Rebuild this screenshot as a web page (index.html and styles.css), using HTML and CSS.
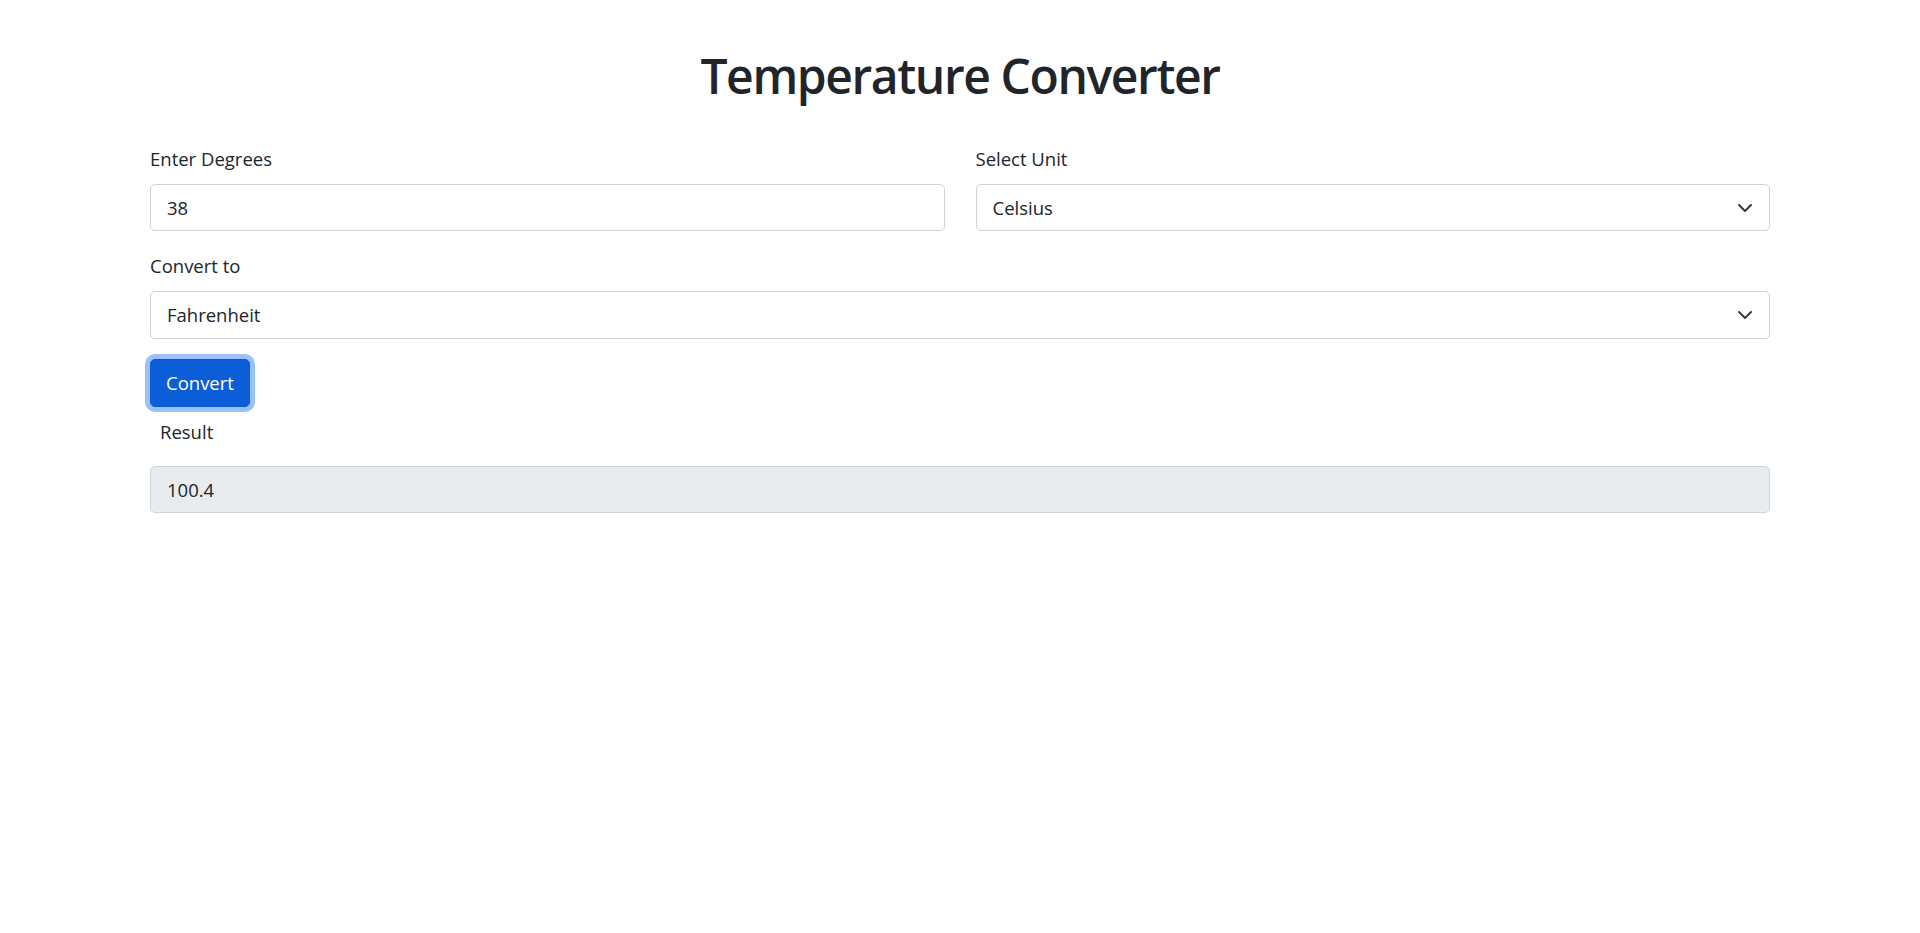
FILE: index.html
```html
<!DOCTYPE html>
<html lang="en">
<head>
<meta charset="utf-8">
<title>Temperature Converter</title>
<link rel="stylesheet" href="styles.css">
</head>
<body>
<div class="container">
  <h1 class="title">Temperature Converter</h1>
  <form class="converter">
    <div class="row">
      <div class="field">
        <label class="form-label" for="deg">Enter Degrees</label>
        <input class="form-control" id="deg" type="text" value="38">
      </div>
      <div class="field">
        <label class="form-label" for="unit">Select Unit</label>
        <div class="select-wrap">
          <select class="form-select" id="unit">
            <option>Celsius</option>
            <option>Fahrenheit</option>
            <option>Kelvin</option>
          </select>
          <svg class="chev" viewBox="0 0 16 16" width="16" height="16" aria-hidden="true"><path d="M2 5l6 6 6-6" fill="none" stroke="#343a40" stroke-width="2" stroke-linecap="round" stroke-linejoin="round"/></svg>
        </div>
      </div>
    </div>
    <div class="field full">
      <label class="form-label" for="to">Convert to</label>
      <div class="select-wrap">
        <select class="form-select" id="to">
          <option>Fahrenheit</option>
          <option>Celsius</option>
          <option>Kelvin</option>
        </select>
        <svg class="chev" viewBox="0 0 16 16" width="16" height="16" aria-hidden="true"><path d="M2 5l6 6 6-6" fill="none" stroke="#343a40" stroke-width="2" stroke-linecap="round" stroke-linejoin="round"/></svg>
      </div>
    </div>
    <button class="btn-primary" type="button">Convert</button>
    <label class="result-label" for="res">Result</label>
    <input class="form-control readonly" id="res" type="text" value="100.4" readonly>
  </form>
</div>
</body>
</html>
```
FILE: styles.css
```css
* { box-sizing: border-box; }
html, body { margin: 0; padding: 0; background: #fff; }
body {
  font-family: "Open Sans", "Noto Sans", "Liberation Sans", sans-serif;
  font-size: 20px;
  line-height: 1.5;
  color: #212529;
}
.container {
  max-width: 1650px;
  margin: 0 auto;
  padding: 0 15px;
}
.title {
  margin: 0;
  padding-top: 47px;
  margin-bottom: 39px;
  text-align: center;
  font-size: 48px;
  font-weight: 600;
  line-height: 1.2;
  letter-spacing: -1.4px;
}
.converter { display: flex; flex-direction: column; }
.row {
  display: grid;
  grid-template-columns: 1fr 1fr;
  column-gap: 31px;
  margin-bottom: 20px;
}
.field { display: flex; flex-direction: column; }
.field.full { margin-bottom: 20px; }
.form-label {
  display: block;
  margin-bottom: 10px;
  font-size: 18.5px;
  line-height: 30px;
}
.form-control, .form-select {
  display: block;
  width: 100%;
  height: 47.5px;
  padding: 0 15px;
  font-family: inherit;
  font-size: 18.5px;
  color: #212529;
  background: #fff;
  border: 1px solid #ced4da;
  border-radius: 5px;
  outline: none;
}
.form-control { padding-left: 16px; }
.form-select {
  -webkit-appearance: none;
  appearance: none;
  padding-left: 16px;
  padding-right: 50px;
}
.select-wrap { position: relative; }
.chev {
  position: absolute;
  right: 17px;
  top: 16px;
  pointer-events: none;
}
.btn-primary {
  align-self: flex-start;
  height: 48px;
  padding: 0 15px;
  font-family: inherit;
  font-size: 18.5px;
  color: #fff;
  background: #0b5ed7;
  border: 1px solid #0a58ca;
  border-radius: 5px;
  box-shadow: 0 0 0 5px rgba(49, 132, 253, 0.5);
  cursor: pointer;
}
.result-label {
  display: block;
  padding: 10px 0 0 10px;
  margin-bottom: 19px;
  font-size: 18.5px;
  line-height: 30px;
}
.readonly {
  background: #e9ecef;
}
```
